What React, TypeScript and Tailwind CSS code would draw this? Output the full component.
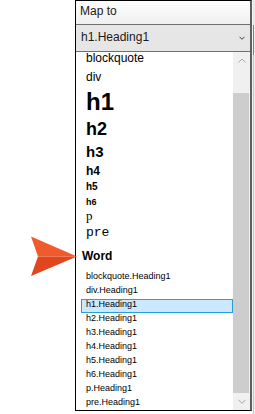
import React from "react";

const lower = [
  "blockquote.Heading1",
  "div.Heading1",
  "h1.Heading1",
  "h2.Heading1",
  "h3.Heading1",
  "h4.Heading1",
  "h5.Heading1",
  "h6.Heading1",
  "p.Heading1",
  "pre.Heading1",
];

function Chevron({ up, color, small }: { up?: boolean; color: string; small?: boolean }) {
  if (small) {
    return (
      <svg width="6" height="4" viewBox="0 0 6 4" className="block">
        <polyline points="0.5,0.8 3,3.3 5.5,0.8" fill="none" stroke={color} strokeWidth="1" />
      </svg>
    );
  }
  return (
    <svg width="8" height="5" viewBox="0 0 8 5" className="block">
      <polyline
        points={up ? "0.5,4.5 4,1 7.5,4.5" : "0.5,0.8 4,4.3 7.5,0.8"}
        fill="none"
        stroke={color}
        strokeWidth="1"
      />
    </svg>
  );
}

export default function App() {
  return (
    <div className="relative w-[255px] h-[414px] bg-white overflow-hidden flex items-start font-['Liberation_Sans',Arial,sans-serif] text-black">
      <div className="w-[75px] shrink-0" />
      <div className="w-[177px] h-[411px] shrink-0 box-border border-l border-t border-b border-black border-r-2 border-r-[#5e5e5e] flex flex-col">
        <div className="h-[23px] shrink-0 bg-linear-to-b from-[#fdfdfd] to-[#f0f0f0] pl-[4px] pt-[4px] text-[12px] leading-[12px] text-[#1a1a1a]">
          Map to
        </div>
        <div className="h-[28px] shrink-0 box-border border-t border-b border-[#707070] bg-[#e6e6e6] flex justify-between">
          <div className="pl-[5px] pt-[6px] text-[12px] leading-[12px] text-[#1a1a1a]">h1.Heading1</div>
          <div className="flex items-center pr-[5px]">
            <Chevron small color="#404040" />
          </div>
        </div>
        <div className="flex h-[358px]">
          <div className="w-[157px] h-[358px] flex flex-col">
            <div className="pl-[10px] text-[12px] leading-[12px] whitespace-nowrap">blockquote</div>
            <div className="pl-[10px] mt-[6px] text-[12px] leading-[15px]">div</div>
            <div className="pl-[10px] mt-[4px] text-[24px] leading-[26px] font-bold">h1</div>
            <div className="pl-[10px] mt-[4px] text-[18px] leading-[20px] font-bold">h2</div>
            <div className="pl-[10px] mt-[5px] text-[15px] leading-[16px] font-bold">h3</div>
            <div className="pl-[10px] mt-[4px] text-[12px] leading-[14px] font-bold">h4</div>
            <div className="pl-[10px] mt-[3px] text-[10px] leading-[12px] font-bold">h5</div>
            <div className="pl-[10px] mt-[3px] text-[9px] leading-[12px] font-bold">h6</div>
            <div className="pl-[10px] mt-[1px] text-[13px] leading-[14px] font-['Liberation_Serif','Times_New_Roman',serif]">p</div>
            <div className="pl-[10px] mt-[3px] text-[13px] leading-[14px] font-['Liberation_Mono','Courier_New',monospace]">pre</div>
            <div className="pl-[6px] mt-[9px] text-[12px] leading-[14px] font-bold">Word</div>
            <div className="mt-[8px] flex flex-col">
              {lower.map((t) => (
                <div
                  key={t}
                  className={
                    t === "h1.Heading1"
                      ? "ml-[5px] w-[152px] h-[14px] shrink-0 box-border border border-[#26a0da] bg-[#cce8ff] pl-[4px] text-[9px] leading-[8px] whitespace-nowrap"
                      : "ml-[5px] w-[152px] h-[14px] shrink-0 box-border border border-transparent pl-[4px] text-[9px] leading-[8px] whitespace-nowrap"
                  }
                >
                  {t}
                </div>
              ))}
            </div>
          </div>
          <div className="w-[17px] h-[358px] bg-[#f0f0f0] flex flex-col">
            <div className="h-[17px] shrink-0 flex items-center justify-center">
              <Chevron up color="#a6a6a6" />
            </div>
            <div className="h-[24px] shrink-0" />
            <div className="h-[300px] shrink-0 bg-[#cdcdcd] mr-[1px]" />
            <div className="h-[17px] shrink-0 flex items-center justify-center">
              <Chevron color="#a6a6a6" />
            </div>
          </div>
        </div>
      </div>
      <div className="flex h-[414px]">
        <div className="w-[1px] bg-[#f4f4f4]" />
        <div className="w-[1px] flex flex-col">
          <div className="h-[25px] bg-[#e4e4e4]" />
          <div className="h-[30px] bg-[#3d8fd8]" />
          <div className="flex-1 bg-[#c4c4c4]" />
        </div>
        <div className="w-[1px] bg-[#ededed]" />
      </div>
      <svg className="absolute left-0 top-0 pointer-events-none" width="255" height="414" viewBox="0 0 255 414">
        <polygon points="31,236.5 77,256.5 38,256.5" fill="#f15a2b" />
        <polygon points="38,256.5 77,256.5 31,276" fill="#e2461f" />
      </svg>
    </div>
  );
}
